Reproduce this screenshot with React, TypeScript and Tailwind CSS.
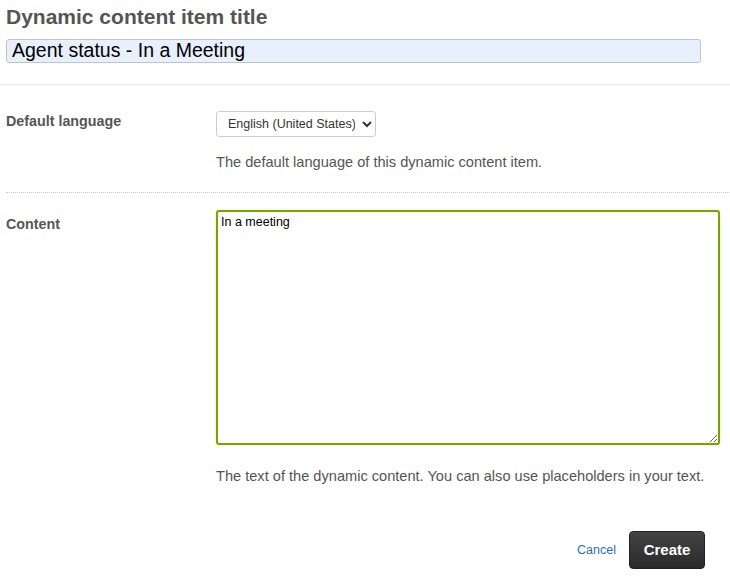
import React, { useState } from 'react';

const App: React.FC = () => {
  const [title, setTitle] = useState('Agent status - In a Meeting');
  const [content, setContent] = useState('In a meeting');

  return (
    <div className="min-h-[576px] bg-white text-[#555] font-['Liberation_Sans',Arial,sans-serif]">
      <div className="px-[6px] pt-[4px]">
        <h1 className="text-[21px] leading-[26px] font-bold text-[#555]">Dynamic content item title</h1>
        <input
          value={title}
          onChange={(e) => setTitle(e.target.value)}
          className="mt-[9px] block w-[695px] h-[24px] px-[5px] bg-[#e8f0fe] border border-[#c3c3c3] rounded-[3px] text-[19.5px] text-black outline-none"
        />
      </div>

      <div className="mt-[21px] border-t border-[#e9e9e9]" />

      <div className="flex px-[6px] pt-[26px] pb-[21px]">
        <div className="w-[210px] text-[14.3px] font-bold leading-[20px]">Default language</div>
        <div className="flex-1">
          <select className="h-[26px] w-[160px] pl-[7px] pr-[4px] text-[12.5px] text-[#333] border border-[#ccc] rounded-[3px] bg-white">
            <option>English (United States)</option>
          </select>
          <p className="mt-[16px] text-[14.6px] leading-[18px]">The default language of this dynamic content item.</p>
        </div>
      </div>

      <div className="ml-[6px] border-t border-dotted border-[#c8c8c8]" />

      <div className="flex px-[6px] pt-[17px]">
        <div className="w-[210px] text-[14.3px] font-bold leading-[28px]">Content</div>
        <div className="flex-1">
          <textarea
            value={content}
            onChange={(e) => setContent(e.target.value)}
            className="block w-[504px] h-[235px] px-[3px] py-[1px] text-[12.5px] text-black border-2 border-[#78a300] rounded-[3px] shadow-[0_0_2px_#c9e388] outline-none"
          />
          <p className="mt-[22px] text-[14.6px] leading-[18px]">
            The text of the dynamic content. You can also use placeholders in your text.
          </p>
        </div>
      </div>

      <div className="flex justify-end items-center gap-[13px] pr-[25px] pt-[46px]">
        <a href="#" className="text-[12.5px] text-[#1f73b7]">Cancel</a>
        <button
          type="button"
          className="h-[38px] w-[76px] rounded-[4px] bg-gradient-to-b from-[#444] to-[#2a2a2a] border border-[#222] text-white text-[15px] font-bold"
        >
          Create
        </button>
      </div>
    </div>
  );
};

export default App;
